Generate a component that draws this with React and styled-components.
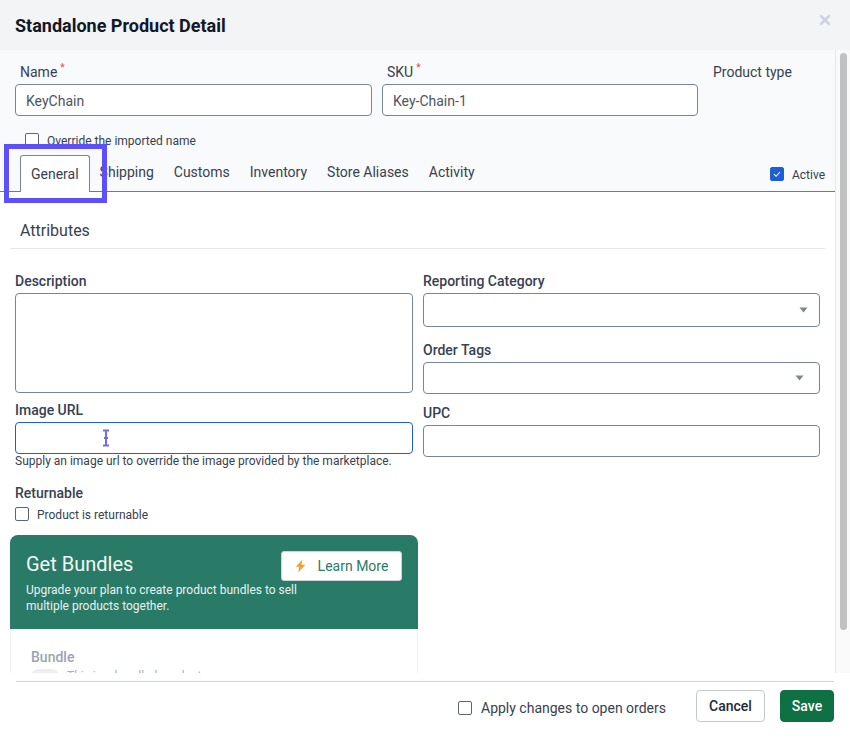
import React from 'react';
import styled, { createGlobalStyle } from 'styled-components';

const GlobalStyle = createGlobalStyle`
  html, body {
    margin: 0;
    padding: 0;
    background: #fff;
    font-family: Roboto, "Liberation Sans", sans-serif;
    color: #1f2937;
  }
  * {
    box-sizing: border-box;
  }
`;

const Modal = styled.div`
  position: relative;
  width: 850px;
  height: 738px;
  display: flex;
  flex-direction: column;
  background: #fff;
  overflow: hidden;
`;

const Header = styled.header`
  height: 50px;
  flex: none;
  display: flex;
  align-items: flex-start;
  justify-content: space-between;
  padding: 15px 18px 0 15px;
  background: #f3f4f6;
`;

const Title = styled.h1`
  margin: 0;
  font-size: 18px;
  line-height: 22px;
  font-weight: 700;
  color: #111827;
`;

const CloseButton = styled.button`
  width: 14px;
  height: 14px;
  margin-top: -2px;
  padding: 0;
  border: none;
  background: none;
  color: #cbd5e1;
`;

const Body = styled.div`
  height: 623px;
  flex: none;
  display: flex;
  overflow: hidden;
`;

const Content = styled.div`
  width: 835px;
  flex: none;
`;

const Scrollbar = styled.div`
  width: 15px;
  flex: none;
  padding: 3px 3px 0 4px;
  background: #fafafa;
  border-left: 1px solid #e8e8e8;
`;

const ScrollThumb = styled.div`
  height: 577px;
  border-radius: 4px;
  background: #c1c1c1;
`;

const TopSection = styled.section`
  height: 142px;
  padding-top: 12px;
  background: #f9fafb;
  border-bottom: 1px solid #6b7a8c;
`;

const TopFields = styled.div`
  display: grid;
  grid-template-columns: 357px 316px auto;
  column-gap: 10px;
  padding-left: 15px;
`;

const TopLabel = styled.label`
  display: block;
  height: 20px;
  margin-bottom: 2px;
  padding-left: 5px;
  font-size: 14px;
  line-height: 20px;
  color: #374151;
`;

const Required = styled.sup`
  margin-left: 3px;
  font-size: 10px;
  line-height: 0;
  color: #ef4444;
`;

const Input = styled.input`
  display: block;
  width: 100%;
  height: ${(p) => p.$height || 32}px;
  padding: 2px 10px 0;
  font-family: inherit;
  font-size: 14px;
  color: #4b5563;
  background: #fff;
  border: 1px solid ${(p) => (p.$focused ? '#1d5fd9' : '#76859a')};
  border-radius: 4px;
  outline: none;
`;

const OverrideRow = styled.div`
  display: flex;
  align-items: center;
  gap: 8px;
  height: 14px;
  margin: 17px 0 8px 25px;
  font-size: 12px;
  color: #374151;
`;

const NudgedText = styled.span`
  padding-top: 2px;
`;

const TabRow = styled.div`
  display: flex;
  align-items: flex-start;
  justify-content: space-between;
  padding: 0 10px 0 20px;
`;

const Tabs = styled.nav`
  display: flex;
`;

const Tab = styled.div`
  height: ${(p) => (p.$active ? 37 : 35)}px;
  padding: 0 10px;
  font-size: 14px;
  line-height: ${(p) => (p.$active ? 36 : 34)}px;
  color: #374151;
  ${(p) =>
    p.$active &&
    `
    background: #fff;
    border: 1px solid #76859a;
    border-bottom: none;
    border-radius: 3px 3px 0 0;
  `}
`;

const ActiveToggle = styled.div`
  display: flex;
  align-items: center;
  gap: 8px;
  height: 14px;
  margin-top: 12px;
  font-size: 12px;
  color: #374151;
`;

const Box = styled.span`
  display: inline-flex;
  align-items: center;
  justify-content: center;
  width: 14px;
  height: 14px;
  flex: none;
  border-radius: 2px;
  border: 1px solid ${(p) => (p.$checked ? '#1d5fd9' : '#5b6675')};
  background: ${(p) => (p.$checked ? '#1d5fd9' : '#fff')};
`;

const SectionTitle = styled.h2`
  margin: 29px 10px 0;
  padding: 0 0 7px 10px;
  height: 28px;
  font-size: 16px;
  line-height: 20px;
  font-weight: 400;
  color: #374151;
  border-bottom: 1px solid #e5e7eb;
`;

const Columns = styled.div`
  display: grid;
  grid-template-columns: 398px 397px;
  column-gap: 10px;
  padding: 22px 0 0 15px;
`;

const Column = styled.div`
  display: flex;
  flex-direction: column;
`;

const FieldLabel = styled.label`
  display: block;
  height: 20px;
  margin: ${(p) => p.$top || 0}px 0 2px;
  font-size: 14px;
  line-height: 20px;
  font-weight: 500;
  color: #374151;
`;

const TextArea = styled.textarea`
  display: block;
  width: 100%;
  height: 100px;
  resize: none;
  background: #fff;
  border: 1px solid #76859a;
  border-radius: 4px;
  outline: none;
`;

const InputWrap = styled.div`
  position: relative;
`;

const TextCursor = styled.svg`
  position: absolute;
  left: 86px;
  top: 7px;
  color: #6f6cf2;
`;

const Help = styled.p`
  margin: 0;
  font-size: 12px;
  line-height: 14px;
  color: #374151;
`;

const CheckRow = styled.div`
  display: flex;
  align-items: center;
  gap: 8px;
  height: 14px;
  margin-top: 2px;
  font-size: 12px;
  color: #374151;
`;

const Select = styled.div`
  display: flex;
  align-items: center;
  justify-content: flex-end;
  height: ${(p) => p.$height}px;
  padding-right: ${(p) => p.$arrowInset}px;
  background: #fff;
  border: 1px solid #76859a;
  border-radius: 4px;
  color: #7b8794;
`;

const BundleCard = styled.div`
  width: 408px;
  margin: 14px 0 0 -5px;
`;

const BundleHeader = styled.div`
  height: 94px;
  padding: 16px 16px 0;
  border-radius: 8px 8px 0 0;
  background: #2a7a68;
  color: #fff;
`;

const BundleTop = styled.div`
  display: flex;
  align-items: flex-start;
  justify-content: space-between;
  height: 30px;
`;

const BundleTitle = styled.div`
  font-size: 20px;
  line-height: 26px;
  color: #f3f8f6;
`;

const LearnMore = styled.button`
  display: flex;
  align-items: center;
  justify-content: center;
  gap: 12px;
  width: 121px;
  height: 30px;
  padding: 0;
  font-family: inherit;
  font-size: 14px;
  color: #2a7a68;
  background: #fff;
  border: 1px solid #d1d5db;
  border-radius: 3px;
`;

const BundleText = styled.p`
  width: 285px;
  margin: 1px 0 0;
  font-size: 12px;
  line-height: 16px;
  color: #e8f2ef;
`;

const BundleBody = styled.div`
  height: 60px;
  padding: 18px 20px 0;
  border: 1px solid #eef0f3;
  border-top: none;
  background: #fff;
`;

const BundleLabel = styled.div`
  height: 20px;
  font-size: 14px;
  line-height: 20px;
  font-weight: 500;
  color: #9ca3af;
`;

const BundleToggleRow = styled.div`
  display: flex;
  align-items: flex-start;
  gap: 8px;
  margin-top: 2px;
  font-size: 12px;
  line-height: 14px;
  color: #a8aeb8;
`;

const Toggle = styled.span`
  width: 28px;
  height: 14px;
  flex: none;
  border-radius: 7px;
  background: #eceef1;
`;

const Footer = styled.footer`
  display: flex;
  align-items: flex-start;
  justify-content: flex-end;
  margin: 8px 16px 0;
  padding-top: 8px;
  border-top: 1px solid #cbd5e1;
`;

const ApplyRow = styled.div`
  display: flex;
  align-items: center;
  gap: 9px;
  height: 16px;
  margin: 10px 30px 0 0;
  font-size: 14px;
  color: #374151;
`;

const Button = styled.button`
  height: 32px;
  width: ${(p) => p.$width}px;
  padding: 0;
  font-family: inherit;
  font-size: 14px;
  font-weight: 500;
  border-radius: 4px;
  border: 1px solid ${(p) => (p.$primary ? '#0f7043' : '#c4c9d0')};
  background: ${(p) => (p.$primary ? '#0f7043' : '#fff')};
  color: ${(p) => (p.$primary ? '#fff' : '#1f2937')};
  margin-left: ${(p) => (p.$primary ? 15 : 0)}px;
`;

const Highlight = styled.div`
  position: absolute;
  left: 4px;
  top: 144px;
  width: 103px;
  height: 59px;
  border: 5px solid #5d50fb;
  pointer-events: none;
`;

const Arrow = () => (
  <svg width="9" height="6" viewBox="0 0 9 6">
    <path d="M0.5 0.5h8L4.5 5.5z" fill="currentColor" />
  </svg>
);

const tabs = ['Shipping', 'Customs', 'Inventory', 'Store Aliases', 'Activity'];

export default function App() {
  return (
    <Modal>
      <GlobalStyle />
      <Header>
        <Title>Standalone Product Detail</Title>
        <CloseButton aria-label="Close">
          <svg width="14" height="14" viewBox="0 0 14 14">
            <path d="M3 3l8 8M11 3l-8 8" stroke="currentColor" strokeWidth="2.6" strokeLinecap="round" />
          </svg>
        </CloseButton>
      </Header>
      <Body>
        <Content>
          <TopSection>
            <TopFields>
              <div>
                <TopLabel>Name<Required>*</Required></TopLabel>
                <Input defaultValue="KeyChain" />
              </div>
              <div>
                <TopLabel>SKU<Required>*</Required></TopLabel>
                <Input defaultValue="Key-Chain-1" />
              </div>
              <div>
                <TopLabel>Product type</TopLabel>
              </div>
            </TopFields>
            <OverrideRow>
              <Box />
              <NudgedText>Override the imported name</NudgedText>
            </OverrideRow>
            <TabRow>
              <Tabs>
                <Tab $active>General</Tab>
                {tabs.map((t) => (
                  <Tab key={t}>{t}</Tab>
                ))}
              </Tabs>
              <ActiveToggle>
                <Box $checked>
                  <svg width="10" height="10" viewBox="0 0 10 10">
                    <path d="M2 5.2l2.1 2.1L8 3" fill="none" stroke="#fff" strokeWidth="1.1" />
                  </svg>
                </Box>
                <NudgedText>Active</NudgedText>
              </ActiveToggle>
            </TabRow>
          </TopSection>

          <SectionTitle>Attributes</SectionTitle>
          <Columns>
            <Column>
              <FieldLabel>Description</FieldLabel>
              <TextArea />
              <FieldLabel $top={7}>Image URL</FieldLabel>
              <InputWrap>
                <Input $focused />
                <TextCursor width="10" height="18" viewBox="0 0 10 18">
                  <path d="M2 1.5h6M2 16.5h6M5 1.5v15M3 9h4" fill="none" stroke="currentColor" strokeWidth="2" />
                </TextCursor>
              </InputWrap>
              <Help>Supply an image url to override the image provided by the marketplace.</Help>
              <FieldLabel $top={15}>Returnable</FieldLabel>
              <CheckRow>
                <Box />
                <NudgedText>Product is returnable</NudgedText>
              </CheckRow>
              <BundleCard>
                <BundleHeader>
                  <BundleTop>
                    <BundleTitle>Get Bundles</BundleTitle>
                    <LearnMore>
                      <svg width="11" height="14" viewBox="0 0 11 14">
                        <path d="M7.5 0.5L0.8 7.8h3.5L3.2 13.5 10.4 5.8H6.4z" fill="#f59e2c" />
                      </svg>
                      Learn More
                    </LearnMore>
                  </BundleTop>
                  <BundleText>Upgrade your plan to create product bundles to sell multiple products together.</BundleText>
                </BundleHeader>
                <BundleBody>
                  <BundleLabel>Bundle</BundleLabel>
                  <BundleToggleRow>
                    <Toggle />
                    This is a bundled product
                  </BundleToggleRow>
                </BundleBody>
              </BundleCard>
            </Column>
            <Column>
              <FieldLabel>Reporting Category</FieldLabel>
              <Select $height={34} $arrowInset={11}><Arrow /></Select>
              <FieldLabel $top={13}>Order Tags</FieldLabel>
              <Select $height={32} $arrowInset={15}><Arrow /></Select>
              <FieldLabel $top={9}>UPC</FieldLabel>
              <Input />
            </Column>
          </Columns>
        </Content>
        <Scrollbar>
          <ScrollThumb />
        </Scrollbar>
      </Body>
      <Footer>
        <ApplyRow>
          <Box />
          Apply changes to open orders
        </ApplyRow>
        <Button $width={69}>Cancel</Button>
        <Button $primary $width={54}>Save</Button>
      </Footer>
      <Highlight />
    </Modal>
  );
}
